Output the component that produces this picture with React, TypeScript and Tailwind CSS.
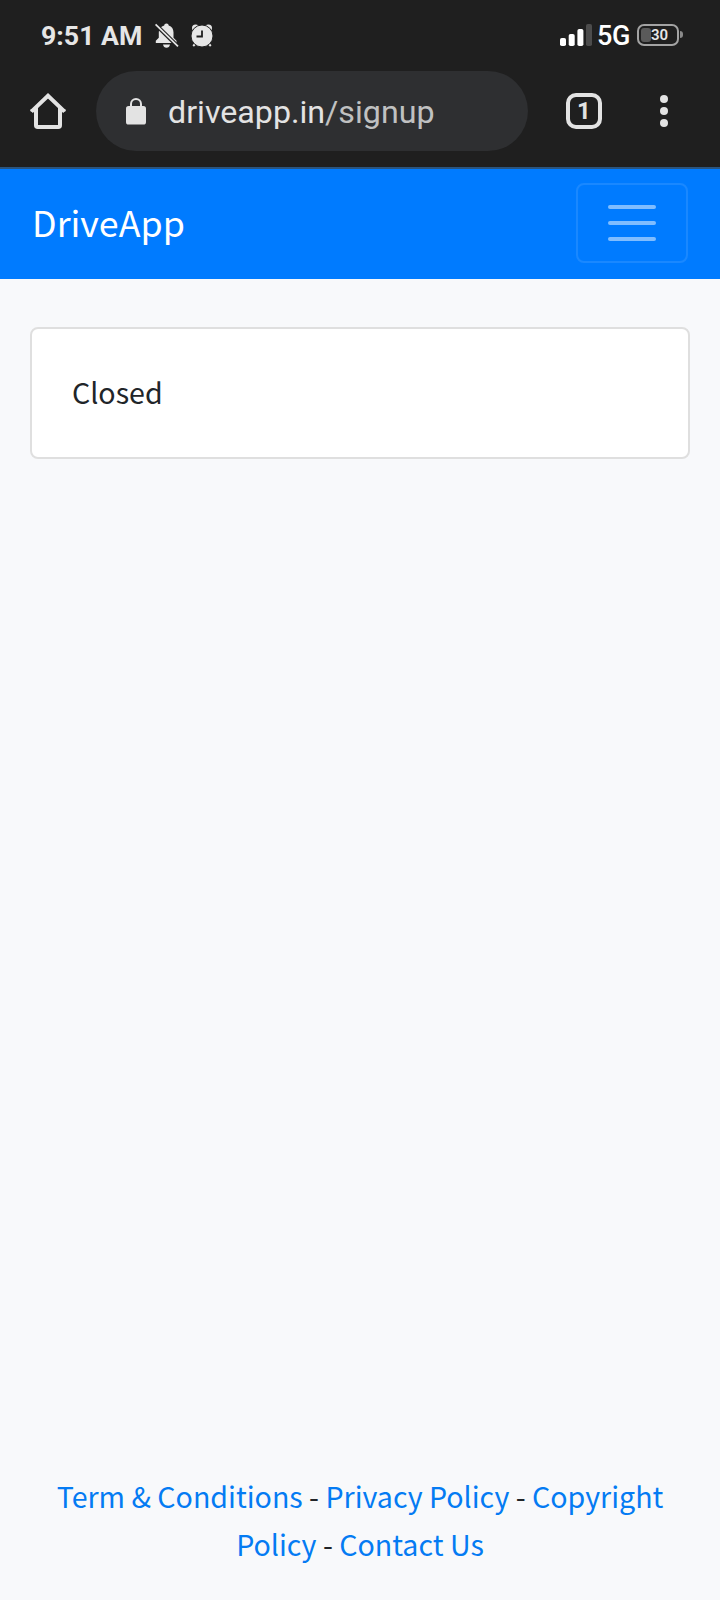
const BellOffIcon = () => (
  <svg width="24" height="26" viewBox="0 0 24 26" fill="#e6e6e6">
    <path d="M11.5 0.4c1.3 0 2.1 0.8 2.2 2 3.2 0.9 4.8 3.6 4.8 7.2v5.2l3 3v2.2H0.8v-2.2l3-3V9.6c0-3.6 2.2-6.3 5.4-7.2 0.1-1.2 1-2 2.3-2z" />
    <path d="M8 21.4h7c-0.5 2.2-1.6 3.3-3.5 3.3s-3-1.1-3.5-3.3z" />
    <path d="M0.5 1.5L23 23.5" stroke="#1f1f1f" strokeWidth="4" />
    <path d="M0.6 1.4L23 23.4" stroke="#e6e6e6" strokeWidth="1.7" />
  </svg>
);

const AlarmIcon = () => (
  <svg width="22" height="24" viewBox="0 0 22 24" fill="#e6e6e6">
    <circle cx="4.6" cy="4" r="3.6" />
    <circle cx="17.4" cy="4" r="3.6" />
    <path d="M5 19l-2.8 3M17 19l2.8 3" stroke="#e6e6e6" strokeWidth="2" />
    <circle cx="11" cy="12" r="11" stroke="#1f1f1f" strokeWidth="1" />
    <path d="M11 6.5v6H5.5" fill="none" stroke="#1f1f1f" strokeWidth="1.8" />
  </svg>
);

const SignalIcon = () => (
  <svg width="33" height="23" viewBox="0 0 33 23" fill="#ffffff">
    <rect x="0" y="14" width="6" height="8" rx="1.8" />
    <rect x="8.7" y="10" width="6" height="12" rx="1.8" />
    <rect x="17.4" y="5" width="6" height="17" rx="1.8" />
    <rect x="26" y="0" width="6" height="22" rx="1.8" fill="#4c4c4c" />
  </svg>
);

const HomeIcon = () => (
  <svg width="36" height="36" viewBox="0 0 36 36" fill="none" stroke="#e3e3e3" strokeWidth="4">
    <path d="M1.4 18.6L18 2.8l16.6 15.8" />
    <path d="M0.6 17.4h5M30.4 17.4h5" strokeWidth="2.4" />
    <path d="M6 15v17.2c0 1 0.7 1.8 1.8 1.8h20.4c1.1 0 1.8-0.8 1.8-1.8V15" />
  </svg>
);

const LockIcon = () => (
  <svg width="20" height="27" viewBox="0 0 20 27">
    <rect x="0" y="8" width="20" height="18.5" rx="2.6" fill="#e3e3e3" />
    <path d="M5 9V6a5 5 0 0 1 10 0v3" fill="none" stroke="#e3e3e3" strokeWidth="2" />
  </svg>
);

const StatusBar = () => (
  <div className="flex h-[71px] items-center pl-[41px] pr-[37px] text-[#e6e6e6]">
    <p className="w-[114px] text-[26.7px] font-bold leading-8">9:51 AM</p>
    <BellOffIcon />
    <div className="ml-3">
      <AlarmIcon />
    </div>
    <div className="ml-auto flex items-center">
      <SignalIcon />
      <p className="ml-1 w-10 whitespace-nowrap text-[27px] font-medium leading-8 tracking-[-0.3px] text-white">
        5G
      </p>
      <div className="relative mb-0.5 flex h-[22px] w-[42px] items-center justify-center rounded-[7px] border-2 border-[#a3a3a3] pl-[3px] pt-px">
        <span className="absolute left-[2px] top-[2px] h-[14px] w-[10px] rounded-[3px] bg-[#5a5a5a]" />
        <span className="relative text-[15px] font-semibold leading-none">30</span>
      </div>
      <span className="mb-0.5 ml-[1px] h-[7px] w-[3px] rounded-r-full bg-[#8a8a8a]" />
    </div>
  </div>
);

const AddressBar = () => (
  <div className="flex h-20 items-center pl-[30px] pr-[52px]">
    <HomeIcon />
    <div className="ml-[30px] flex h-20 w-[432px] items-center rounded-full bg-[#2e2f31] pl-[30px]">
      <LockIcon />
      <p className="ml-[22px] pt-0.5 text-[32.2px] leading-10 text-[#e3e3e3]">
        driveapp.in<span className="text-[#c0c1c1]">/signup</span>
      </p>
    </div>
    <div className="ml-[38px] flex size-9 items-center justify-center rounded-[10px] border-4 border-[#e3e3e3] text-2xl font-bold leading-none text-[#e3e3e3]">
      1
    </div>
    <div className="ml-auto flex flex-col gap-1">
      <span className="size-2 rounded-full bg-[#e3e3e3]" />
      <span className="size-2 rounded-full bg-[#e3e3e3]" />
      <span className="size-2 rounded-full bg-[#e3e3e3]" />
    </div>
  </div>
);

const Navbar = () => (
  <nav className="flex h-[110px] items-center justify-between bg-[#007bff] px-8 pb-0.5">
    <a href="#" className="pb-1 text-[35.8px] leading-[60px] text-white">
      DriveApp
    </a>
    <button
      type="button"
      className="flex h-20 w-28 flex-col items-center justify-center gap-3 rounded-lg border-2 border-white/10"
    >
      <span className="h-1 w-12 rounded-full bg-white/50" />
      <span className="h-1 w-12 rounded-full bg-white/50" />
      <span className="h-1 w-12 rounded-full bg-white/50" />
    </button>
  </nav>
);

const Footer = () => (
  <footer className="mt-auto px-[30px] pb-8 text-center text-[28.6px] leading-[48px]">
    <a href="#" className="text-[#047bf3]">Term &amp; Conditions</a> -{" "}
    <a href="#" className="text-[#047bf3]">Privacy Policy</a> -{" "}
    <a href="#" className="text-[#047bf3]">Copyright Policy</a> -{" "}
    <a href="#" className="text-[#047bf3]">Contact Us</a>
  </footer>
);

export default function App() {
  return (
    <div className="flex h-[1600px] w-[720px] flex-col overflow-hidden bg-[#f8f9fb] font-['Noto_Sans_CJK_SC',sans-serif] text-[#212529]">
      <header className="h-[169px] border-b-2 border-[#2a5580] bg-[#1f1f1f] font-[Roboto,sans-serif]">
        <StatusBar />
        <AddressBar />
      </header>
      <Navbar />
      <main className="px-[30px] pt-12">
        <div className="rounded-lg border-2 border-[#dfdfdf] bg-white px-10 pb-[41px] pt-[39px]">
          <p className="text-[28.6px] leading-[48px]">Closed</p>
        </div>
      </main>
      <Footer />
    </div>
  );
}
